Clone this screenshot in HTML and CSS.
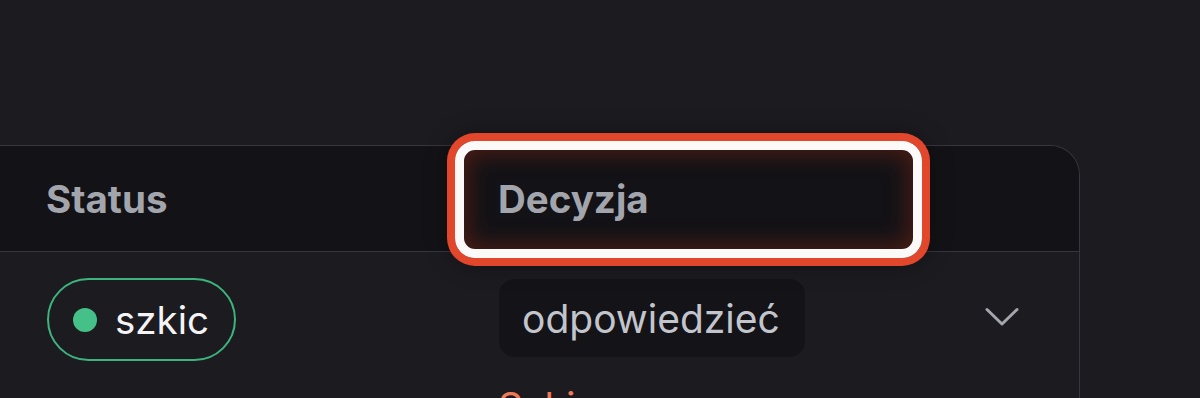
FILE: index.html
```html
<!DOCTYPE html>
<html lang="pl">
<head>
<meta charset="utf-8">
<title>Tabela</title>
<link rel="stylesheet" href="styles.css">
</head>
<body>
  <div class="card">
    <div class="row head">
      <div class="cell c1">Status</div>
      <div class="cell c2 focus-wrap">
        <span>Decyzja</span>
        <div class="focus-ring"></div>
      </div>
      <div class="cell c3"></div>
    </div>
    <div class="row body">
      <div class="cell c1">
        <span class="pill"><span class="dot"></span>szkic</span>
      </div>
      <div class="cell c2 stack">
        <span class="chip">odpowiedzieć</span>
        <span class="note">Szkic</span>
      </div>
      <div class="cell c3 chev">
        <svg width="34" height="20" viewBox="0 0 34 20"><polyline points="2,2.5 17,17 32,2.5" fill="none" stroke="#a4a5ad" stroke-width="3" stroke-linecap="round" stroke-linejoin="round"/></svg>
      </div>
    </div>
  </div>
</body>
</html>
```
FILE: styles.css
```css
html, body {
  margin: 0;
  padding: 0;
}
body {
  background: #1c1b20;
  height: 398px;
  overflow: hidden;
  font-family: Inter, "Noto Sans", sans-serif;
}
.card {
  margin-top: 145px;
  margin-left: -30px;
  width: 1110px;
  box-sizing: border-box;
  border: 1px solid #37363d;
  border-bottom: none;
  border-radius: 0 30px 0 0;
}
.row {
  display: grid;
  grid-template-columns: 482px 470px 1fr;
}
.head {
  height: 105px;
  background: #131216;
  border-bottom: 1px solid #37363d;
  border-radius: 0 29px 0 0;
  align-items: center;
}
.head .cell {
  font-size: 38.5px;
  font-weight: 700;
  color: #a3a5ad;
  line-height: 48px;
}
.c1 { padding-left: 75px; }
.c2 { padding-left: 45px; }
.focus-wrap {
  position: relative;
  height: 100%;
  display: flex;
  align-items: center;
}
.focus-ring {
  position: absolute;
  left: 2px;
  top: -5px;
  width: 467px;
  height: 117px;
  box-sizing: border-box;
  border: 9px solid #fbfaf8;
  border-radius: 20px;
  box-shadow:
    0 0 0 8px #e2472c,
    0 0 22px 8px rgba(0, 0, 0, 0.35),
    inset 0 0 22px 4px rgba(120, 38, 20, 0.55);
  pointer-events: none;
}
.body {
  padding-top: 26px;
  align-items: start;
}
.pill {
  display: inline-flex;
  align-items: center;
  gap: 18px;
  height: 83px;
  box-sizing: border-box;
  padding: 0 25px 0 24px;
  margin-left: 1px;
  border: 2px solid #3db47e;
  border-radius: 999px;
  font-size: 38.5px;
  color: #f4f4f6;
}
.dot {
  width: 24px;
  height: 24px;
  border-radius: 50%;
  background: #45c088;
}
.stack {
  display: flex;
  flex-direction: column;
  align-items: flex-start;
  padding-top: 1px;
}
.chip {
  display: inline-flex;
  align-items: center;
  height: 78px;
  padding: 0 25px 0 23px;
  margin-left: 1px;
  border-radius: 16px;
  background: #141317;
  font-size: 39px;
  color: #c3c5cd;
}
.note {
  margin-top: 26px;
  font-size: 39px;
  line-height: 48px;
  color: #ee7a57;
}
.chev {
  display: flex;
  justify-content: center;
  padding-top: 29px;
  padding-left: 2px;
}
```
